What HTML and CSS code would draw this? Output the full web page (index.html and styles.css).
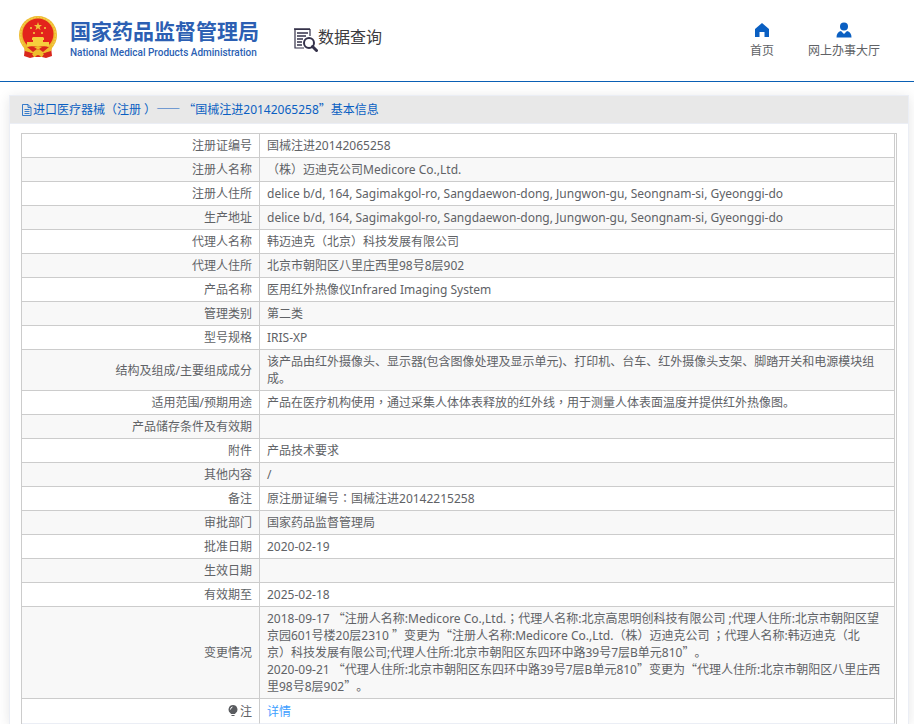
FILE: index.html
```html
<!DOCTYPE html>
<html lang="zh-CN">
<head>
<meta charset="utf-8">
<title>国家药品监督管理局 数据查询</title>
<link rel="stylesheet" href="styles.css">
</head>
<body>
<header class="site-header">
  <div class="brand">
    <svg class="emblem" viewBox="0 0 40 43" aria-hidden="true">
      <path d="M7 31l-1 9 6 2 8-2 8 2 6-2-1-9z" fill="#d8261c"/>
      <circle cx="20" cy="19" r="19" fill="#edb92e"/>
      <circle cx="20" cy="19" r="17.500" fill="none" stroke="#f4cb48" stroke-width="1.500" stroke-dasharray="2 1"/>
      <circle cx="20" cy="18" r="15.500" fill="#e3241c"/>
      <path d="M20 6l1 3h3l-2.400 2 .9 3-2.500-1.800L17.500 14l.9-3L16 9h3z" fill="#f0c43a"/>
      <path d="M12 11h2v2h-2zM26 11h2v2h-2zM15 16h2v2h-2zM23 16h2v2h-2z" fill="#f0a93a"/>
      <path d="M14 22l1-1h10l1 1v2h-1v2h6v4H9v-4h6v-2h-1z" fill="#f6cf3d"/>
      <path d="M5 29q7 3 15 1 8 2 15-1l-2 6-7 2-6-4-6 4-7-2z" fill="#efbd2c"/>
      <path d="M9 31h7l3 2-4 3zM31 31h-7l-3 2 4 3z" fill="#d8261c"/>
      <path d="M14 38q6-6 12 0l-2 3H16z" fill="#efbd2c"/>
      <path d="M17 41q3-4 6 0z" fill="#d8261c"/>
    </svg>
    <div class="brand-text">
      <div class="brand-cn">国家药品监督管理局</div>
      <div class="brand-en">National Medical Products Administration</div>
    </div>
  </div>
  <div class="module">
    <svg class="module-icon" viewBox="0 0 24 24" aria-hidden="true">
      <path d="M16 8V1.500H1V20h9" fill="none" stroke="#35324a" stroke-width="1.200"/>
      <path d="M0 1h16M3 5h11M3 8h9M3 11h6M3 14h5M3 17h5" fill="none" stroke="#35324a" stroke-width="1.400"/>
      <circle cx="15" cy="15" r="5" fill="#fff" stroke="#35324a" stroke-width="2"/>
      <path d="M18.500 18.500l4 4" stroke="#35324a" stroke-width="3" stroke-linecap="round"/>
    </svg>
    <span>数据查询</span>
  </div>
  <nav class="nav">
    <a href="#home">
      <svg viewBox="0 0 16 16" aria-hidden="true"><path d="M8 1l7 6v8h-4.500v-5h-5v5H1V7z" fill="#0a5fc2"/></svg>
      首页
    </a>
    <a href="#hall">
      <svg viewBox="0 0 16 16" aria-hidden="true"><circle cx="8" cy="4.500" r="4" fill="#0a5fc2"/><path d="M.5 15.500q0-5.500 4.500-6.500l3 3 3-3q4.500 1 4.500 6.500z" fill="#0a5fc2"/></svg>
      网上办事大厅
    </a>
  </nav>
</header>
<main class="card">
  <h1 class="card-title">
    <svg viewBox="0 0 12 12" aria-hidden="true"><path d="M1.500 .5h5.500l3 3v8H1.500zM7 .5v3h3M3.500 5.500h5M3.500 7.500h5M3.500 9.500h5" fill="none" stroke="#0a5fc2" stroke-width=".8"/></svg>
    <span>进口医疗器械（注册 ）<b class="cjk">——</b>&nbsp;<b class="cjk">“</b>国械注进20142065258<b class="cjk">”</b>基本信息</span>
  </h1>
  <div class="table-frame">
    <table class="detail">
      <tbody>
        <tr><th scope="row">注册证编号</th><td>国械注进20142065258</td></tr>
        <tr><th scope="row">注册人名称</th><td>（株）迈迪克公司Medicore Co.,Ltd.</td></tr>
        <tr><th scope="row">注册人住所</th><td>delice b/d, 164, Sagimakgol-ro, Sangdaewon-dong, Jungwon-gu, Seongnam-si, Gyeonggi-do</td></tr>
        <tr><th scope="row">生产地址</th><td>delice b/d, 164, Sagimakgol-ro, Sangdaewon-dong, Jungwon-gu, Seongnam-si, Gyeonggi-do</td></tr>
        <tr><th scope="row">代理人名称</th><td>韩迈迪克（北京）科技发展有限公司</td></tr>
        <tr><th scope="row">代理人住所</th><td>北京市朝阳区八里庄西里98号8层902</td></tr>
        <tr><th scope="row">产品名称</th><td>医用红外热像仪Infrared Imaging System</td></tr>
        <tr><th scope="row">管理类别</th><td>第二类</td></tr>
        <tr><th scope="row">型号规格</th><td>IRIS-XP</td></tr>
        <tr><th scope="row">结构及组成/主要组成成分</th><td>该产品由红外摄像头、显示器(包含图像处理及显示单元)、打印机、台车、红外摄像头支架、脚踏开关和电源模块组成。</td></tr>
        <tr><th scope="row">适用范围/预期用途</th><td>产品在医疗机构使用<b class="mid" lang="zh-TW">，</b>通过采集人体体表释放的红外线<b class="mid" lang="zh-TW">，</b>用于测量人体表面温度并提供红外热像图。</td></tr>
        <tr><th scope="row">产品储存条件及有效期</th><td></td></tr>
        <tr><th scope="row">附件</th><td>产品技术要求</td></tr>
        <tr><th scope="row">其他内容</th><td>/</td></tr>
        <tr><th scope="row">备注</th><td>原注册证编号<b class="mid" lang="zh-TW">：</b>国械注进20142215258</td></tr>
        <tr><th scope="row">审批部门</th><td>国家药品监督管理局</td></tr>
        <tr><th scope="row">批准日期</th><td>2020-02-19</td></tr>
        <tr><th scope="row">生效日期</th><td></td></tr>
        <tr><th scope="row">有效期至</th><td>2025-02-18</td></tr>
        <tr><th scope="row">变更情况</th><td>2018-09-17 <b class="cjk">“</b>注册人名称:Medicore Co.,Ltd.<b class="mid" lang="zh-TW">；</b>代理人名称:北京高思明创科技有限公司 ;代理人住所:北京市朝阳区望京园601号楼20层2310 <b class="cjk">”</b>变更为<b class="cjk">“</b>注册人名称:Medicore Co.,Ltd.（株）迈迪克公司 <b class="mid" lang="zh-TW">；</b>代理人名称:韩迈迪克（北<br>京）科技发展有限公司;代理人住所:北京市朝阳区东四环中路39号7层B单元810<b class="cjk">”</b>。<br>2020-09-21 <b class="cjk">“</b>代理人住所:北京市朝阳区东四环中路39号7层B单元810<b class="cjk">”</b>变更为<b class="cjk">“</b>代理人住所:北京市朝阳区八里庄西里98号8层902<b class="cjk">”</b>。</td></tr>
        <tr class="note"><th scope="row"><svg viewBox="0 0 10 12" aria-hidden="true"><path d="M5 0a4.500 4.500 0 0 1 2.500 8.200L7 9H3l-.5-.8A4.500 4.500 0 0 1 5 0zM3.500 10h3v1h-3z" fill="#5a5c60"/><path d="M2.500 4.500Q2.500 2.500 4.500 2" fill="none" stroke="#fff"/></svg>注</th><td><a href="#detail">详情</a></td></tr>
      </tbody>
    </table>
  </div>
</main>
</body>
</html>
```
FILE: styles.css
```css
* {
  box-sizing: border-box;
}

body {
  margin: 0;
  font: 12px/17px "Noto Sans", "Noto Sans CJK SC", sans-serif;
  color: #606266;
  background: #fff;
  text-spacing-trim: space-all;
}

a {
  color: #409eff;
  text-decoration: none;
}

/* header */
.site-header {
  display: flex;
  align-items: flex-start;
  height: 82px;
  padding: 16px 34px 0 18px;
  border-bottom: 1px solid #0a5fb4;
}

.brand {
  display: flex;
  gap: 12px;
}

.emblem {
  width: 40px;
  height: 43px;
}

.brand-text {
  color: #2c5fb3;
  white-space: nowrap;
}

.brand-cn {
  margin-bottom: 4px;
  font: bold 21px/28px "Noto Sans CJK SC", sans-serif;
}

.brand-en {
  font: 500 10px/10px Roboto, sans-serif;
}

.module {
  display: flex;
  align-items: flex-start;
  margin: 8px 0 0 35px;
  font: 16px/24px "Noto Sans CJK SC", sans-serif;
  color: #3c3c40;
}

.module-icon {
  width: 24px;
  height: 24px;
  margin-top: 4px;
}

.nav {
  display: flex;
  gap: 34px;
  margin: 6px 0 0 auto;
}

.nav a {
  display: flex;
  flex-direction: column;
  align-items: center;
  gap: 4px;
  color: #606266;
}

.nav svg {
  width: 16px;
  height: 16px;
}

/* card */
.card {
  margin: 13px 5px 0 9px;
  border: 1px solid #ebeef5;
  border-bottom: 0;
  box-shadow: 0 2px 12px rgba(0, 0, 0, .1);
}

.card-title {
  display: flex;
  align-items: center;
  height: 28px;
  margin: 0;
  padding: 0 11px;
  border-bottom: 1px solid #ebeef5;
  background: #e8e8e8;
  font-size: 12px;
  font-weight: 400;
  color: #0a5fc2;
}

.card-title svg {
  width: 12px;
  height: 12px;
}

/* full-width punctuation */
.cjk,
.mid {
  font-family: "Noto Sans CJK SC", sans-serif;
  font-weight: 400;
  line-height: 12px;
}

.mid {
  font-family: "Noto Sans CJK TC", sans-serif;
}

.table-frame {
  margin: 9px 11px 0;
  padding-right: 1px;
  border: 1px solid #ccc;
  border-width: 1px 1px 0;
}

.detail {
  width: 100%;
  border-collapse: separate;
  border-spacing: 0;
  table-layout: fixed;
}

.detail th,
.detail td {
  height: 24px;
  padding: 3px 7px;
  border: 1px solid #ccc;
  border-width: 0 1px 1px 0;
  line-height: 17px;
}

.detail th {
  width: 238px;
  font-weight: 400;
  text-align: right;
}

.detail tr:nth-child(even) {
  background: #f8f8f8;
}

.detail .note th,
.detail .note td {
  height: 25px;
  border-bottom-color: #ebeef5;
}

.note svg {
  width: 10px;
  height: 12px;
  margin-right: 2px;
  vertical-align: -1px;
}
```
